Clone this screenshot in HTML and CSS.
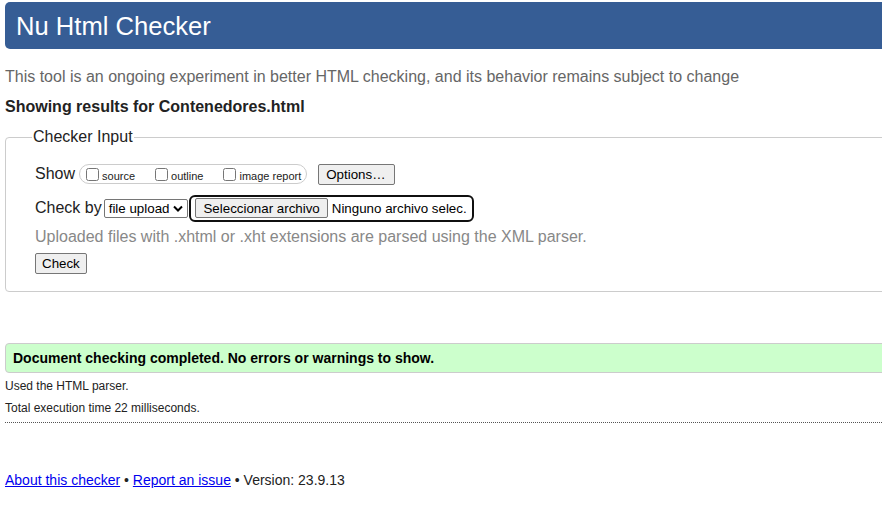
FILE: index.html
```html
<!DOCTYPE html>
<html lang="en">
<head>
<meta charset="utf-8">
<title>Showing results for Contenedores.html - Nu Html Checker</title>
<link rel="stylesheet" href="styles.css">
</head>
<body>
<div class="page">
  <header class="masthead"><h1>Nu Html Checker</h1></header>
  <p class="intro">This tool is an ongoing experiment in better HTML checking, and its behavior remains subject to change</p>
  <p class="results-for">Showing results for Contenedores.html</p>
  <fieldset class="checker-input">
    <legend>Checker Input</legend>
    <div class="row row-show">
      <span class="row-label">Show</span>
      <span class="pill">
        <label class="opt"><input type="checkbox"><span>source</span></label>
        <label class="opt"><input type="checkbox"><span>outline</span></label>
        <label class="opt"><input type="checkbox"><span>image report</span></label>
      </span>
      <button class="btn btn-options" type="button">Options…</button>
    </div>
    <div class="row row-checkby">
      <span class="row-label">Check by</span>
      <span class="select">file upload<svg class="chev" width="10" height="7" viewBox="0 0 10 7"><path d="M1 1.5 L5 5.5 L9 1.5" fill="none" stroke="#000" stroke-width="2"/></svg></span>
      <span class="file-input"><button class="btn btn-file" type="button">Seleccionar archivo</button><span class="file-name">Ninguno archivo selec.</span></span>
    </div>
    <p class="hint">Uploaded files with .xhtml or .xht extensions are parsed using the XML parser.</p>
    <div class="row row-submit"><button class="btn" type="button">Check</button></div>
  </fieldset>
  <div class="success">Document checking completed. No errors or warnings to show.</div>
  <p class="meta meta-first">Used the HTML parser.</p>
  <p class="meta">Total execution time 22 milliseconds.</p>
  <hr class="rule">
  <p class="footer"><a href="#">About this checker</a> • <a href="#">Report an issue</a> • Version: 23.9.13</p>
</div>
</body>
</html>
```

FILE: styles.css
```css
html, body {
  margin: 0;
  padding: 0;
  overflow: hidden;
  background: #fff;
}
body {
  font-family: "Liberation Sans", Arial, sans-serif;
  color: #222;
  font-size: 16px;
}
.page {
  margin-left: 5px;
  margin-right: -30px;
}
.masthead {
  margin-top: 2px;
  height: 47px;
  background: #365d95;
  border-radius: 5px 0 0 5px;
  display: flex;
  align-items: center;
}
.masthead h1 {
  margin: 0 0 0 11px;
  font-weight: normal;
  font-size: 25.6px;
  color: #fff;
  line-height: 30px;
}
.intro {
  margin: 19px 0 0;
  color: #666;
  line-height: 18px;
}
.results-for {
  margin: 12px 0 0;
  font-weight: bold;
  line-height: 18px;
}
.checker-input {
  margin: 12px 0 0;
  padding: 0 0 17px 29px;
  border: 1px solid #ccc;
  border-radius: 4px;
}
.checker-input legend {
  padding: 0 1px;
  margin-left: -3px;
  line-height: 18px;
  color: #222;
}
.row {
  display: flex;
  align-items: center;
}
.row-show {
  margin-top: 17px;
  height: 22px;
}
.row-label {
  margin-right: 3px;
}
.row-show .row-label {
  margin-right: 4px;
}
.pill {
  display: inline-flex;
  align-items: center;
  height: 18px;
  border: 1px solid #ccc;
  border-radius: 10px;
  padding: 0 5px 0 2px;
}
.opt {
  display: inline-flex;
  align-items: center;
  font-size: 11px;
  margin-right: 16px;
}
.opt:last-child {
  margin-right: 0;
}
.opt input {
  margin: 0 3px 0 4px;
  width: 13px;
  height: 13px;
}
.opt span {
  position: relative;
  top: 2px;
}
.btn {
  font-family: "Liberation Sans", Arial, sans-serif;
  font-size: 13.33px;
  color: #000;
  background: #efefef;
  border: 1px solid #767676;
  border-radius: 2px;
  padding: 1px 6px;
  height: 21px;
  line-height: 17px;
}
.btn-options {
  margin-left: 11px;
  padding: 1px 8px 1px 7px;
}
.row-checkby {
  margin-top: 9px;
  height: 28px;
}
.select {
  display: inline-flex;
  align-items: center;
  gap: 4px;
  height: 19px;
  box-sizing: border-box;
  border: 1px solid #767676;
  border-radius: 2px;
  padding: 0 4px 0 4px;
  margin-left: -1px;
  font-size: 13.33px;
  color: #000;
  background: #fff;
}
.chev {
  display: block;
}
.file-input {
  display: inline-flex;
  align-items: center;
  margin-left: 1px;
  height: 27px;
  box-sizing: border-box;
  border: 2px solid #101010;
  border-radius: 6px;
  padding: 0 5px 0 4px;
  font-size: 13.33px;
  color: #000;
}
.btn-file {
  height: 20px;
  padding: 0 7px;
  line-height: 17px;
}
.file-name {
  margin-left: 4px;
}
.hint {
  margin: 6px 0 0;
  color: #888;
  line-height: 18px;
}
.row-submit {
  margin-top: 7px;
  height: 21px;
}
.success {
  margin-top: 51px;
  border: 1px solid #ccc;
  border-radius: 4px;
  background: #ccffcc;
  padding: 5px 7px;
  font-weight: bold;
  font-size: 14px;
  line-height: 18px;
  color: #000;
}
.meta {
  margin: 8px 0 0;
  font-size: 12px;
  line-height: 14px;
}
.meta-first {
  margin-top: 6px;
}
.rule {
  margin: 7px 30px 0 0;
  border: 0;
  border-top: 1px dotted #555;
  height: 0;
}
.footer {
  margin: 49px 0 0;
  font-size: 14px;
  line-height: 16px;
}
.footer a {
  color: #00e;
}
```
